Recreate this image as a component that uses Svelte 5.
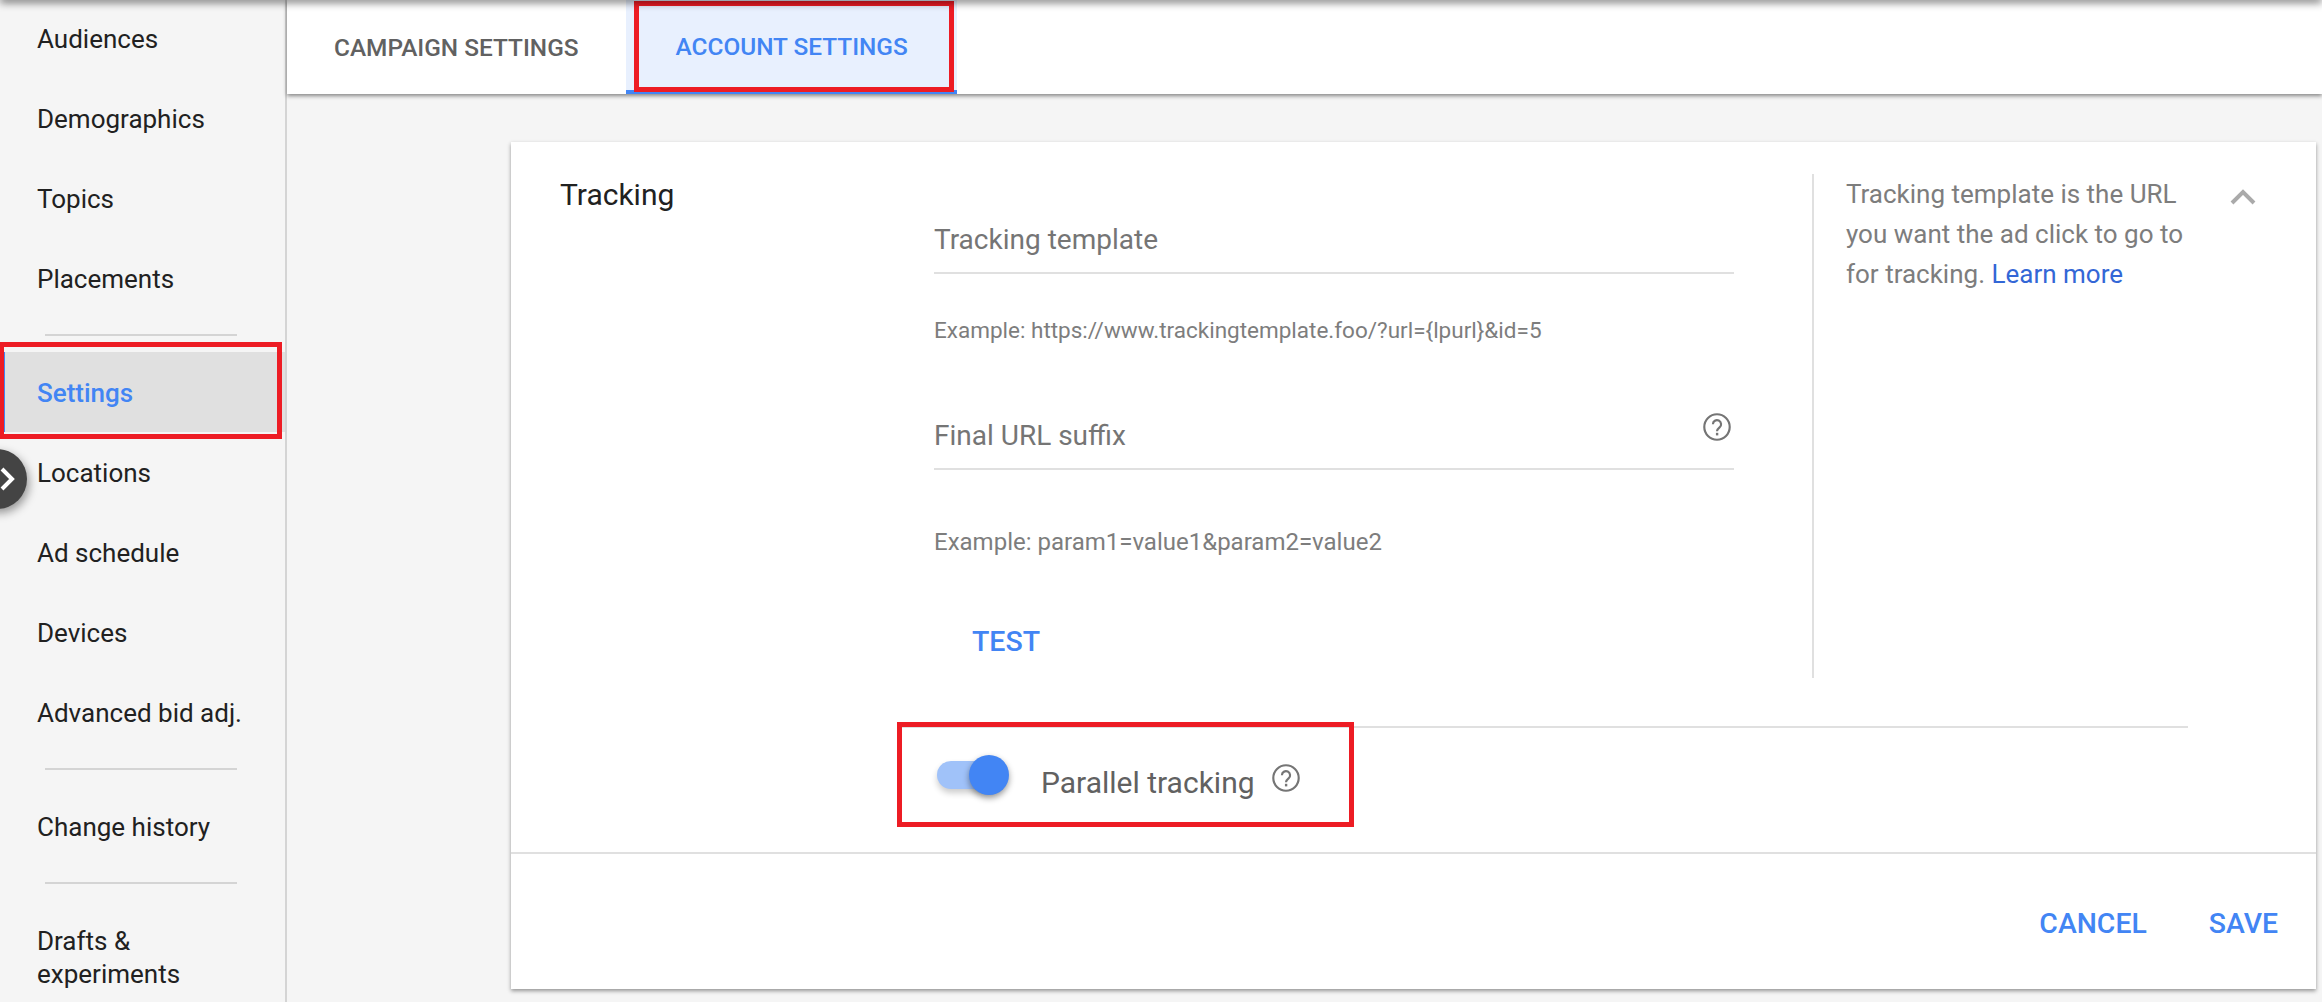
<script>
	const before = ['Audiences', 'Demographics', 'Topics', 'Placements'];
	const after = ['Locations', 'Ad schedule', 'Devices', 'Advanced bid adj.'];
</script>

<div class="page">
	<div class="top-shadow"></div>

	<aside class="sidebar">
		{#each before as item}
			<div class="nav-item">{item}</div>
		{/each}
		<div class="sep"></div>
		<div class="nav-item active">Settings</div>
		{#each after as item}
			<div class="nav-item">{item}</div>
		{/each}
		<div class="sep"></div>
		<div class="nav-item">Change history</div>
		<div class="sep"></div>
		<div class="nav-item tall">Drafts &amp;<br />experiments</div>

		<div class="red-box settings-mark"></div>
		<button class="expand" aria-label="Expand">
			<svg width="17" height="26" viewBox="0 0 17 26"><path d="M2 3l10 10L2 23" fill="none" stroke="#fff" stroke-width="4" /></svg>
		</button>
	</aside>

	<main class="main">
		<nav class="tabs">
			<div class="tab">CAMPAIGN SETTINGS</div>
			<div class="tab selected">
				ACCOUNT SETTINGS
				<div class="red-box tab-mark"></div>
			</div>
		</nav>

		<section class="card">
			<div class="card-body">
				<div class="upper">
					<h2 class="title">Tracking</h2>
					<div class="fields">
						<div class="field first">
							<span class="label">Tracking template</span>
						</div>
						<p class="example">Example: https://www.trackingtemplate.foo/?url={'{'}lpurl{'}'}&amp;id=5</p>
						<div class="field second">
							<span class="label">Final URL suffix</span>
							<svg class="help" width="28" height="28" viewBox="0 0 26 26">
								<circle cx="13" cy="13" r="11.8" fill="none" stroke="#757575" stroke-width="2" />
								<path d="M9.2 10.4a3.8 3.8 0 1 1 6.2 3c-1.5 1.2-2.4 1.8-2.4 3.6" fill="none" stroke="#757575" stroke-width="2" />
								<rect x="12" y="18.4" width="2.2" height="2.4" fill="#757575" />
							</svg>
						</div>
						<p class="example second-example">Example: param1=value1&amp;param2=value2</p>
						<div class="test">TEST</div>
					</div>
					<div class="hint">
						<p>Tracking template is the URL you want the ad click to go to for tracking. <span class="link">Learn more</span></p>
						<svg class="collapse" width="28" height="18" viewBox="0 0 28 18"><path d="M3 15L14 4l11 11" fill="none" stroke="#aaa" stroke-width="4" /></svg>
					</div>
				</div>
				<div class="parallel">
					<div class="toggle"><div class="knob"></div></div>
					<span class="parallel-label">Parallel tracking</span>
					<svg class="parallel-help" width="28" height="28" viewBox="0 0 26 26">
						<circle cx="13" cy="13" r="11.8" fill="none" stroke="#757575" stroke-width="2" />
						<path d="M9.2 10.4a3.8 3.8 0 1 1 6.2 3c-1.5 1.2-2.4 1.8-2.4 3.6" fill="none" stroke="#757575" stroke-width="2" />
						<rect x="12" y="18.4" width="2.2" height="2.4" fill="#757575" />
					</svg>
					<div class="red-box parallel-mark"></div>
				</div>
			</div>
			<footer class="actions">
				<span>CANCEL</span>
				<span>SAVE</span>
			</footer>
		</section>
	</main>
</div>

<style>
	:global(body) {
		margin: 0;
	}

	.page {
		position: relative;
		display: flex;
		width: 2322px;
		height: 1002px;
		overflow: hidden;
		background: #f5f5f5;
		font-family: Roboto, "Liberation Sans", sans-serif;
	}

	.top-shadow {
		position: absolute;
		top: -6px;
		left: 0;
		right: 0;
		height: 6px;
		box-shadow: 0 2px 8px rgba(0, 0, 0, 0.65);
		z-index: 3;
	}

	/* sidebar */
	.sidebar {
		position: relative;
		flex: 0 0 285px;
		border-right: 2px solid #d4d4d4;
	}
	.nav-item {
		box-sizing: border-box;
		display: flex;
		align-items: center;
		height: 80px;
		padding: 2px 0 0 37px;
		font-size: 26px;
		color: #212121;
	}
	.nav-item:first-child {
		margin-top: -2px;
	}
	.nav-item.active {
		background: #e0e0e0;
		box-shadow: inset 5px 0 0 #4285f4;
		color: #4285f4;
		font-weight: 500;
	}
	.nav-item.tall {
		display: block;
		height: auto;
		line-height: 33px;
		padding-top: 25px;
	}
	.sep {
		width: 192px;
		height: 2px;
		margin: 16px 0 16px 45px;
		background: #d4d4d4;
	}
	.expand {
		position: absolute;
		top: 449px;
		left: -33px;
		display: flex;
		align-items: center;
		justify-content: flex-end;
		width: 60px;
		height: 60px;
		padding: 0 10px 0 0;
		border: 0;
		border-radius: 50%;
		background: #444;
		box-shadow: 2px 4px 10px rgba(0, 0, 0, 0.4);
	}

	/* annotations drawn on the screenshot */
	.red-box {
		position: absolute;
		box-sizing: border-box;
		border: 5px solid #ed1c24;
		z-index: 4;
	}
	.settings-mark {
		top: 342px;
		left: -1px;
		width: 283px;
		height: 97px;
	}
	.tab-mark {
		top: 1px;
		left: 8px;
		width: 320px;
		height: 91px;
	}
	.parallel-mark {
		top: -6px;
		left: 0;
		width: 457px;
		height: 105px;
	}

	/* main */
	.main {
		flex: 1;
		display: flex;
		flex-direction: column;
		min-width: 0;
	}
	.tabs {
		position: relative;
		z-index: 1;
		display: flex;
		height: 94px;
		padding-left: 47px;
		background: #fff;
		box-shadow: 0 2px 4px rgba(0, 0, 0, 0.45);
	}
	.tab {
		position: relative;
		box-sizing: border-box;
		display: flex;
		align-items: center;
		height: 94px;
		font-size: 24.4px;
		font-weight: 500;
		color: #616161;
	}
	.tab.selected {
		width: 331px;
		margin-left: 47px;
		padding: 3px 0 0 50px;
		background: #e8f0fe;
		border-bottom: 4px solid #4285f4;
		color: #4285f4;
	}

	.card {
		display: flex;
		flex-direction: column;
		box-sizing: border-box;
		height: 847px;
		margin: 48px 6px 0 224px;
		background: #fff;
		box-shadow: 0 2px 4px rgba(0, 0, 0, 0.4);
	}
	.card-body {
		flex: 1;
		min-height: 0;
		display: flex;
		flex-direction: column;
	}
	.upper {
		display: flex;
		height: 504px;
		padding-top: 32px;
	}
	.title {
		flex: 0 0 423px;
		margin: 0;
		padding-left: 49px;
		box-sizing: border-box;
		font-size: 30px;
		font-weight: 400;
		line-height: 41px;
		color: #212121;
	}
	.fields {
		flex: 0 0 800px;
		padding-top: 33px;
	}
	.field {
		position: relative;
		display: flex;
		align-items: center;
		border-bottom: 2px solid #e0e0e0;
		font-size: 28px;
		color: #757575;
	}
	.field.first {
		height: 65px;
		margin-top: 0;
	}
	.field.second {
		height: 66px;
		justify-content: space-between;
	}
	.help {
		margin: -16px 3px 0 0;
	}
	.example {
		margin: 0;
		height: 128px;
		box-sizing: border-box;
		padding-top: 41px;
		font-size: 22.5px;
		line-height: 30px;
		color: #7d7d7d;
	}
	.second-example {
		height: 109px;
		padding-top: 57px;
		font-size: 24px;
	}
	.test {
		margin-left: 38px;
		padding-top: 46px;
		font-size: 28.5px;
		font-weight: 500;
		color: #4285f4;
	}
	.hint {
		display: flex;
		flex: 0 0 503px;
		box-sizing: border-box;
		margin-left: 78px;
		padding: 0 0 0 32px;
		border-left: 2px solid #e0e0e0;
		height: 504px;
	}
	.hint p {
		flex: 0 0 350px;
		margin: 0;
		font-size: 26px;
		line-height: 40px;
		color: #7d7d7d;
	}
	.link {
		color: #3367d6;
	}
	.collapse {
		margin: 14px 58px 0 auto;
	}
	.parallel {
		position: relative;
		display: flex;
		align-items: center;
		height: 126px;
		margin: 48px 128px 0 386px;
		border-top: 2px solid #e0e0e0;
		box-sizing: border-box;
		padding: 0 0 30px 40px;
	}
	.toggle {
		position: relative;
		width: 62px;
		height: 28px;
		border-radius: 14px;
		background: #a0c2f9;
		box-shadow: 0 4px 6px rgba(0, 0, 0, 0.2);
	}
	.knob {
		position: absolute;
		top: -6px;
		right: -10px;
		width: 40px;
		height: 40px;
		border-radius: 50%;
		background: #4285f4;
		box-shadow: 0 3px 6px rgba(0, 0, 0, 0.4);
	}
	.parallel-label {
		margin: 14px 0 0 42px;
		font-size: 30px;
		color: #616161;
	}
	.parallel-help {
		margin: 6px 0 0 17px;
	}
	.actions {
		flex: 0 0 137px;
		display: flex;
		justify-content: flex-end;
		align-items: center;
		gap: 62px;
		padding: 4px 38px 0 0;
		box-sizing: border-box;
		border-top: 2px solid #e0e0e0;
		font-size: 28.4px;
		font-weight: 500;
		color: #4285f4;
	}
</style>
